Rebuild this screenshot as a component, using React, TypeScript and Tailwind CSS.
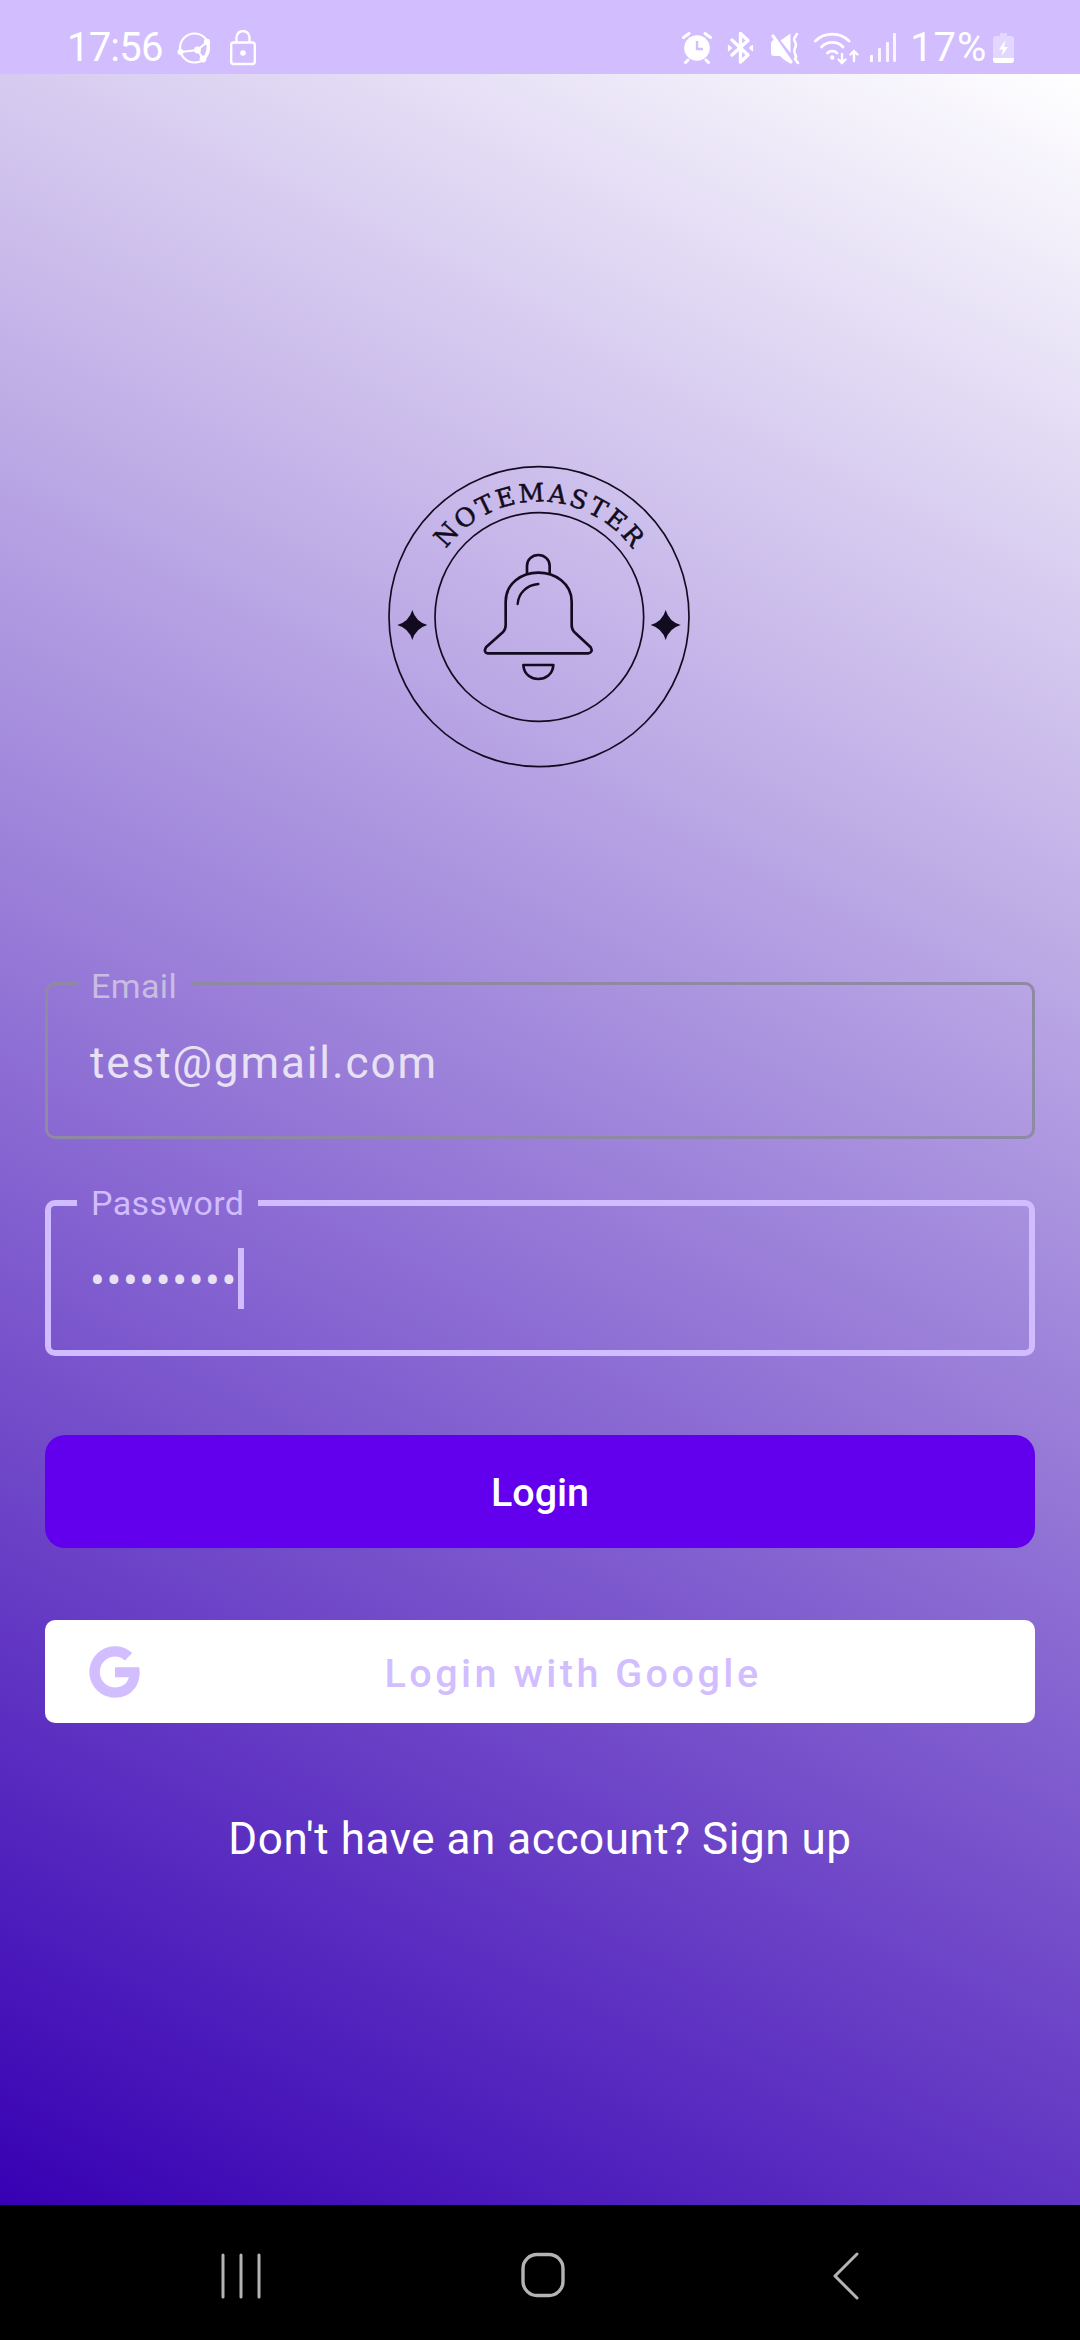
import React from "react";

const W = "#ffffff";

function Status() {
  return (
    <div className="h-[74px] bg-[#d2bdff] flex justify-between pt-[30px] pl-[67px] pr-[66px] shrink-0 text-white font-['Roboto',sans-serif]">
      <div className="flex items-start">
        <span className="text-[40px] leading-[36px] tracking-[-0.8px]">17:56</span>
        <svg className="ml-[14px]" width="36" height="36" viewBox="0 0 36 36" fill="none" stroke={W} strokeWidth="2.2" strokeLinecap="round">
          <circle cx="17.5" cy="18" r="14.5" />
          <path d="M3.5 22 L20.5 20 L30 12 M20.5 20 L26 29 M30 12 C32 18 30 25 26 29" />
          <g fill={W} stroke="none">
            <circle cx="3.5" cy="22" r="3" />
            <circle cx="20.5" cy="20" r="3.4" />
            <circle cx="30" cy="12" r="3.2" />
            <circle cx="26" cy="29" r="3.4" />
          </g>
        </svg>
        <svg className="ml-[17px]" width="26" height="36" viewBox="0 0 26 36" fill="none" stroke={W} strokeWidth="2.4">
          <rect x="1.2" y="12.5" width="23.6" height="21.5" rx="2.5" />
          <path d="M6.5 12 V7.5 a6.5 6.5 0 0 1 13 0 V12" />
          <circle cx="13" cy="23" r="2.8" fill={W} stroke="none" />
        </svg>
      </div>
      <div className="flex items-start">
        <svg width="30" height="36" viewBox="0 0 30 36" fill="none">
          <circle cx="15" cy="18" r="12.8" fill={W} />
          <path d="M15 11 V19 H21" stroke="#d2bdff" strokeWidth="2.4" />
          <path d="M1.5 7.5 L7 3.5 M28.5 7.5 L23 3.5 M6 30 L3.5 32.5 M24 30 L26.5 32.5" stroke={W} strokeWidth="3" strokeLinecap="round" />
        </svg>
        <svg className="ml-[15px]" width="27" height="36" viewBox="0 0 27 36" fill="none" stroke={W} strokeWidth="3.4" strokeLinejoin="round" strokeLinecap="round">
          <path d="M5 10 L21 25 L13.5 32 V3.5 L21 10.5 L5 25" />
          <path d="M1.5 15.5 L4.5 18 L1.5 20.5 Z M25.5 15.5 L22.5 18 L25.5 20.5 Z" fill={W} strokeWidth="1.2" />
        </svg>
        <svg className="ml-[16px]" width="30" height="36" viewBox="0 0 30 36" fill="none">
          <path d="M3 10 L9 13 L20 29 V33 Q16 32 10 26 H4 Q1 26 1 23 V14 Q1 11 3 10 Z" fill={W} />
          <path d="M10.5 10.5 L20.5 3.5 V23 Z" fill={W} />
          <path d="M3 6 L21 32" stroke={W} strokeWidth="3.2" strokeLinecap="round" />
          <path d="M27 4 L24.5 8 Q23.5 10 25 12 Q27 15 25 18 Q23.5 21 25 24 Q27 27 25 29 L28 33" stroke={W} strokeWidth="2.6" strokeLinecap="round" />
        </svg>
        <svg className="ml-[14px]" width="46" height="36" viewBox="0 0 46 36" fill="none" stroke={W} strokeWidth="2.8" strokeLinecap="round">
          <path d="M1.5 11 A24 24 0 0 1 35 11" />
          <path d="M7.5 17 A15 15 0 0 1 29 17" />
          <path d="M13.5 23 A7 7 0 0 1 23 23" />
          <circle cx="18.3" cy="27.5" r="2.2" fill={W} stroke="none" />
          <path d="M28 24 V33 M24.5 29.5 L28 33 L31.5 29.5 M40 31 V21 M36.5 24.5 L40 21 L43.5 24.5" strokeWidth="2.4" />
        </svg>
        <svg className="ml-[8px]" width="28" height="36" viewBox="0 0 28 36" fill={W}>
          <rect x="2" y="25" width="3" height="7" rx="1" />
          <rect x="10" y="18" width="3" height="14" rx="1" opacity="0.85" />
          <rect x="18" y="12" width="3" height="20" rx="1" opacity="0.85" />
          <rect x="25" y="3" width="3" height="29" rx="1" opacity="0.85" />
        </svg>
        <span className="ml-[14px] text-[40px] leading-[36px] tracking-[0.8px]">17%</span>
        <svg className="ml-[6px]" width="21" height="36" viewBox="0 0 21 36" fill="none">
          <path d="M7 3 H14 V6 H18 Q21 6 21 9 V30 Q21 33 18 33 H3 Q0 33 0 30 V9 Q0 6 3 6 H7 Z" fill={W} fillOpacity="0.4" />
          <path d="M0 28 H21 V30 Q21 33 18 33 H3 Q0 33 0 30 Z" fill={W} />
          <path d="M12.5 10 L6 19.5 H10 L8.5 26 L15 17 H11 Z" fill={W} />
        </svg>
      </div>
    </div>
  );
}

function Logo() {
  const ink = "#120b20";
  return (
    <svg className="mx-auto mt-[376px] block" width="340" height="340" viewBox="0 0 1020 1020" fill="none">
      <defs>
        <path id="logoArc" d="M162 500 A345 345 0 0 1 852 500" />
      </defs>
      <circle cx="507" cy="500" r="450" stroke={ink} strokeWidth="5" />
      <circle cx="508" cy="501" r="313" stroke={ink} strokeWidth="5" />
      <text fill={ink} stroke={ink} strokeWidth="1.5" fontFamily="'DejaVu Serif', serif" fontSize="76" textAnchor="middle" textLength="650" lengthAdjust="spacing">
        <textPath href="#logoArc" startOffset="50%">NOTEMASTER</textPath>
      </text>
      <g fill={ink}>
        <path d="M127 480 Q137 515 172 525 Q137 535 127 570 Q117 535 82 525 Q117 515 127 480Z" />
        <path d="M887 480 Q897 515 932 525 Q897 535 887 570 Q877 535 842 525 Q877 515 887 480Z" />
      </g>
      <g stroke={ink} strokeWidth="8" strokeLinejoin="round" strokeLinecap="round">
        <path d="M471 368 V347 a34 32 0 0 1 68 0 V368" />
        <path d="M352 610 H656 Q670 606 662 592 L612 545 Q605 538 605 525 V455 C605 400 555 368 505 368 C455 368 407 400 407 455 V525 Q407 538 400 545 L348 592 Q340 606 352 610Z" />
        <path d="M443 462 C445 430 470 405 505 402" strokeWidth="7" />
        <path d="M460 645 H550 C548 675 525 687 505 687 C485 687 462 675 460 645Z" />
      </g>
    </svg>
  );
}

function GoogleG() {
  return (
    <svg width="56" height="56" viewBox="0 0 24 24" fill="#d2bdff">
      <path d="M22.56 12.25c0-.78-.07-1.53-.2-2.25H12v4.26h5.92c-.26 1.37-1.04 2.53-2.21 3.31v2.77h3.57c2.08-1.92 3.28-4.74 3.28-8.09z" />
      <path d="M12 23c2.97 0 5.46-.98 7.28-2.66l-3.57-2.77c-.98.66-2.23 1.06-3.71 1.06-2.86 0-5.29-1.93-6.16-4.53H2.18v2.84C3.99 20.53 7.7 23 12 23z" />
      <path d="M5.84 14.09c-.22-.66-.35-1.36-.35-2.09s.13-1.43.35-2.09V7.07H2.18C1.43 8.55 1 10.22 1 12s.43 3.45 1.18 4.93l2.85-2.22.81-.62z" />
      <path d="M12 5.38c1.62 0 3.06.56 4.21 1.64l3.15-3.15C17.45 2.09 14.97 1 12 1 7.7 1 3.99 3.47 2.18 7.07l3.66 2.84c.87-2.6 3.3-4.53 6.16-4.53z" />
    </svg>
  );
}

function Nav() {
  const c = "#b4b4b4";
  return (
    <div className="h-[135px] bg-black shrink-0 pl-[90px] pt-[47px]">
      <div className="grid grid-cols-3 w-[907px] justify-items-center">
        <svg width="48" height="48" viewBox="0 0 48 48" fill="none" stroke={c} strokeWidth="3" strokeLinecap="round">
          <path d="M6 3 V45 M24 3 V45 M42 3 V45" />
        </svg>
        <svg width="46" height="48" viewBox="0 0 46 48" fill="none" stroke={c} strokeWidth="3.4">
          <rect x="3" y="2.5" width="40" height="41" rx="14" />
        </svg>
        <svg width="28" height="48" viewBox="0 0 28 48" fill="none" stroke={c} strokeWidth="3" strokeLinecap="round" strokeLinejoin="round">
          <path d="M25 2 L3 24 L25 46" />
        </svg>
      </div>
    </div>
  );
}

export default function App() {
  return (
    <div className="w-[1080px] h-[2340px] flex flex-col font-['Roboto',sans-serif] overflow-hidden">
      <Status />
      <main className="flex-1 min-h-0 bg-[linear-gradient(26.9deg,#3700b3,#ffffff)]">
        <Logo />
        <div className="px-[45px] mt-[174px]">
          <fieldset className="h-[175px] border-[3px] border-[#8f8aa3] rounded-[10px] pl-[42px]">
            <legend className="ml-[-13px] px-[14px] pt-[6px] text-[34px] leading-[33px] text-[#c9bce2] tracking-[0.4px]">Email</legend>
            <div className="text-[44px] leading-[60px] mt-[30px] text-[#e8e0f3] tracking-[1.9px]">test@gmail.com</div>
          </fieldset>
          <fieldset className="h-[171px] mt-[46px] border-[6px] border-[#d0bcff] rounded-[10px] pl-[39px]">
            <legend className="ml-[-13px] px-[14px] pt-[2px] text-[34px] leading-[33px] text-[#d0bcff] tracking-[0.4px]">Password</legend>
            <div className="flex items-start h-[61px] mt-[28px]">
              <span className="mt-[3px] text-[44px] leading-[61px] text-[#e8e0f3] tracking-[1.6px]">•••••••••</span>
              <span className="w-[6px] h-[61px] bg-[#d0bcff]"></span>
            </div>
          </fieldset>
          <button className="block w-full h-[113px] mt-[79px] rounded-[20px] bg-[#6200ee] text-white text-[39.5px] pt-[2px] font-medium">Login</button>
          <button className="flex items-center w-full h-[103px] mt-[72px] rounded-[10px] bg-white pl-[42px] pr-[32px]">
            <GoogleG />
            <span className="flex-1 text-center text-[39.5px] pt-[4px] font-medium text-[#d2bdff] tracking-[3.5px]">Login with Google</span>
          </button>
          <p className="mt-[86px] text-center text-white text-[44px] leading-[60px] tracking-[0.55px]">Don't have an account? Sign up</p>
        </div>
      </main>
      <Nav />
    </div>
  );
}
